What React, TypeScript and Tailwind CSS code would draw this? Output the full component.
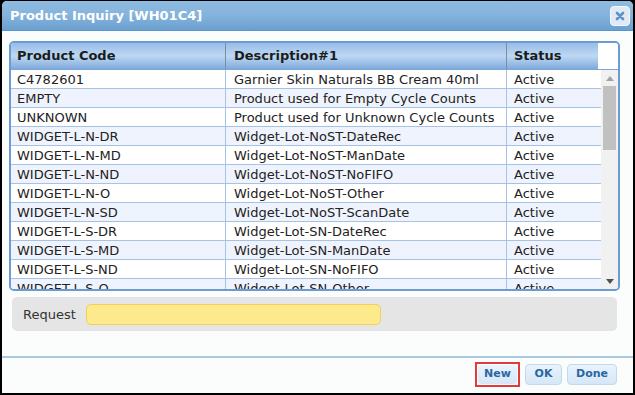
import React from 'react';

const rows = [
  ['C4782601', 'Garnier Skin Naturals BB Cream 40ml', 'Active'],
  ['EMPTY', 'Product used for Empty Cycle Counts', 'Active'],
  ['UNKNOWN', 'Product used for Unknown Cycle Counts', 'Active'],
  ['WIDGET-L-N-DR', 'Widget-Lot-NoST-DateRec', 'Active'],
  ['WIDGET-L-N-MD', 'Widget-Lot-NoST-ManDate', 'Active'],
  ['WIDGET-L-N-ND', 'Widget-Lot-NoST-NoFIFO', 'Active'],
  ['WIDGET-L-N-O', 'Widget-Lot-NoST-Other', 'Active'],
  ['WIDGET-L-N-SD', 'Widget-Lot-NoST-ScanDate', 'Active'],
  ['WIDGET-L-S-DR', 'Widget-Lot-SN-DateRec', 'Active'],
  ['WIDGET-L-S-MD', 'Widget-Lot-SN-ManDate', 'Active'],
  ['WIDGET-L-S-ND', 'Widget-Lot-SN-NoFIFO', 'Active'],
  ['WIDGET-L-S-O', 'Widget-Lot-SN-Other', 'Active'],
];

export default function App() {
  return (
    <div
      className="w-[635px] h-[395px] bg-black pt-px px-[2px] pb-[2px] overflow-hidden"
      style={{ fontFamily: '"DejaVu Sans", Verdana, sans-serif' }}
    >
      <div className="flex flex-col h-full bg-[#fbfdfd] rounded-t-[5px] overflow-hidden">
        {/* title bar */}
        <div className="h-[30px] shrink-0 flex items-center justify-between pl-[8px] pr-[3px] bg-gradient-to-b from-[#8fbbe0] via-[#84b3dc] to-[#6ba0d0] border-b border-[#5a95cb]">
          <span className="text-white font-bold text-[13px] leading-none">Product Inquiry [WH01C4]</span>
          <div className="w-[20px] h-[20px] rounded-[4px] bg-[#dfeaf6] border border-[#f3f8fd] flex items-center justify-center mt-px">
            <svg width="10" height="10" viewBox="0 0 10 10">
              <path d="M2 2 L8 8 M8 2 L2 8" stroke="#5b93c9" strokeWidth="2.6" strokeLinecap="round" />
            </svg>
          </div>
        </div>

        {/* grid */}
        <div className="pl-[7px] pr-[13px] pt-[10px]">
          <div className="h-[250px] border-2 border-[#6b9bd0] rounded-[5px] flex flex-col overflow-hidden bg-white">
            <div className="h-[27px] shrink-0 flex border-b border-[#7ea6d4]">
              <div className="w-[215px] pl-[6px] flex items-center font-bold text-[13px] text-[#1c1c1c] bg-gradient-to-b from-[#98bde8] via-[#bdd8f3] to-[#80aadc] border-r border-[#7f8c99]">
                Product Code
              </div>
              <div className="w-[281px] pl-[8px] flex items-center font-bold text-[13px] text-[#1c1c1c] bg-gradient-to-b from-[#98bde8] via-[#bdd8f3] to-[#80aadc] border-r border-[#7f8c99]">
                Description#1
              </div>
              <div className="w-[91px] pl-[7px] flex items-center font-bold text-[13px] text-[#1c1c1c] bg-gradient-to-b from-[#98bde8] via-[#bdd8f3] to-[#80aadc]">
                Status
              </div>
              <div className="flex-1 bg-white" />
            </div>
            <div className="flex flex-1 min-h-0">
              <div className="w-[590px] overflow-hidden">
                {rows.map((r, i) => (
                  <div
                    key={i}
                    className={`h-[19px] flex border-b border-[#a6c3e6] text-[13px] leading-[19px] text-[#222] ${i % 2 === 1 ? 'bg-[#eef3fd]' : 'bg-white'}`}
                  >
                    <div className="w-[215px] pl-[6px] border-r border-[#a6c3e6] whitespace-nowrap">{r[0]}</div>
                    <div className="w-[281px] pl-[8px] border-r border-[#a6c3e6] whitespace-nowrap">{r[1]}</div>
                    <div className="flex-1 pl-[7px] whitespace-nowrap">{r[2]}</div>
                  </div>
                ))}
              </div>
              <div className="flex-1 bg-[#f1f1f1] flex flex-col items-center">
                <div className="h-[16px] flex items-center justify-center">
                  <svg width="8" height="5" viewBox="0 0 8 5">
                    <path d="M0 5 L4 0 L8 5 Z" fill="#a3a3a3" />
                  </svg>
                </div>
                <div className="w-[13px] h-[64px] bg-[#c1c1c1]" />
                <div className="flex-1" />
                <div className="h-[16px] flex items-center justify-center">
                  <svg width="8" height="5" viewBox="0 0 8 5">
                    <path d="M0 0 L8 0 L4 5 Z" fill="#505050" />
                  </svg>
                </div>
              </div>
            </div>
          </div>

          {/* request */}
          <div className="mt-[6px] ml-[3px] mr-[3px] h-[34px] bg-[#e5e5e5] rounded-[5px] flex items-center pl-[11px] gap-[10px]">
            <span className="text-[13px] leading-none text-[#333] shrink-0">Request</span>
            <div className="w-[295px] h-[21px] bg-[#fdea8c] border border-[#f2cf5e] rounded-[5px]" />
          </div>
        </div>

        <div className="flex-1" />

        {/* footer */}
        <div className="h-[37px] shrink-0 border-t-2 border-[#a7cadf] flex items-center justify-end pr-[16px] gap-[5px] pb-[2px]">
          <div className="border-2 border-[#e23b3b] p-px">
            <div className="w-[39px] h-[19px] rounded-[3px] bg-gradient-to-b from-[#e9f3fc] to-[#d5e7f7] flex items-center justify-center text-[11px] font-bold text-[#2b679f]">
              New
            </div>
          </div>
          <div className="w-[37px] h-[21px] rounded-[4px] border border-[#c3d9ec] bg-gradient-to-b from-[#e9f3fc] to-[#d5e7f7] flex items-center justify-center text-[11px] font-bold text-[#2b679f]">
            OK
          </div>
          <div className="w-[50px] h-[21px] rounded-[4px] border border-[#c3d9ec] bg-gradient-to-b from-[#e9f3fc] to-[#d5e7f7] flex items-center justify-center text-[11px] font-bold text-[#2b679f]">
            Done
          </div>
        </div>
      </div>
    </div>
  );
}
